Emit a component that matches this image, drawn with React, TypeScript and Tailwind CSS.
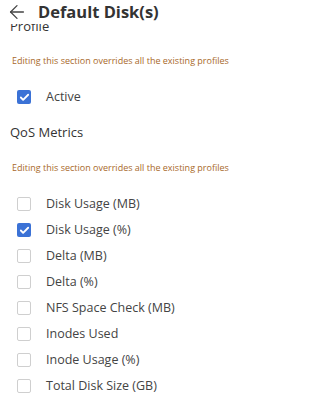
import React from 'react';
import { ArrowLeft, Check } from 'lucide-react';

const metrics = [
  { label: 'Disk Usage (MB)', checked: false },
  { label: 'Disk Usage (%)', checked: true },
  { label: 'Delta (MB)', checked: false },
  { label: 'Delta (%)', checked: false },
  { label: 'NFS Space Check (MB)', checked: false },
  { label: 'Inodes Used', checked: false },
  { label: 'Inode Usage (%)', checked: false },
  { label: 'Total Disk Size (GB)', checked: false },
];

const Box = ({ checked }: { checked: boolean }) =>
  checked ? (
    <span className="w-[14px] h-[14px] rounded-[2px] bg-[#3b72d6] flex items-center justify-center shrink-0">
      <Check className="w-[11px] h-[11px] text-white" strokeWidth={4} />
    </span>
  ) : (
    <span className="w-[14px] h-[14px] rounded-[2px] border border-[#cfcfcf] bg-white shrink-0" />
  );

const Row = ({ label, checked }: { label: string; checked: boolean }) => (
  <div className="h-[26px] flex items-center pl-[17px]">
    <Box checked={checked} />
    <span className="ml-[15px] text-[12.5px] text-[#444]">{label}</span>
  </div>
);

const Warning = () => (
  <p className="text-[9px] leading-[14px] text-[#a8692a] pl-[12px]">
    Editing this section overrides all the existing profiles
  </p>
);

export default function App() {
  return (
    <div className="w-[285px] h-[410px] bg-white overflow-hidden" style={{ fontFamily: '"Open Sans", "Liberation Sans", sans-serif' }}>
      {/* Header */}
      <div className="h-[24px] flex items-center pl-[6px] bg-white">
        <ArrowLeft className="w-[22px] h-[22px] text-[#444] shrink-0" strokeWidth={1.4} />
        <h1 className="ml-[10px] text-[16.5px] font-bold text-[#333] leading-[20px]">Default Disk(s)</h1>
      </div>

      {/* scrolled-off section title */}
      <div className="h-[8px] overflow-hidden">
        <div className="-mt-[8px] pl-[10px] text-[13px] leading-[20px] text-[#333]">Profile</div>
      </div>

      <div className="mt-[22px]">
        <Warning />
      </div>

      <div className="mt-[16px]">
        <Row label="Active" checked />
      </div>

      <h2 className="mt-[12px] pl-[10px] text-[13px] leading-[20px] text-[#333]">QoS Metrics</h2>

      <div className="mt-[19px]">
        <Warning />
      </div>

      <div className="mt-[16px]">
        {metrics.map((m) => (
          <Row key={m.label} label={m.label} checked={m.checked} />
        ))}
      </div>
    </div>
  );
}
